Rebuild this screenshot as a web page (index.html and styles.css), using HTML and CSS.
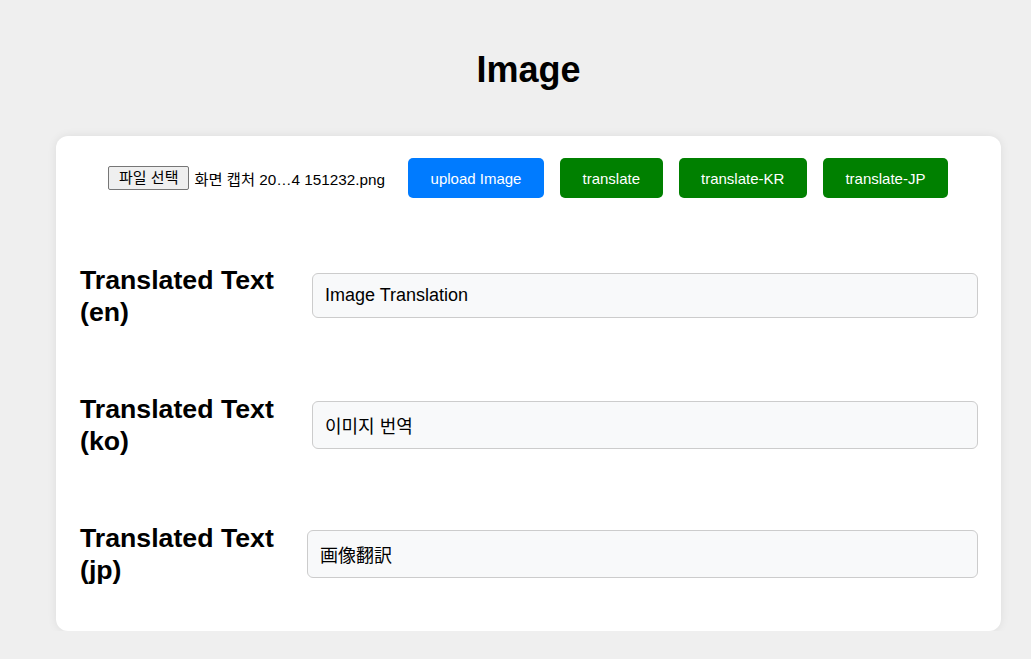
FILE: index.html
```html
<!DOCTYPE html>
<html lang="ko">
<head>
<meta charset="utf-8">
<title>Image</title>
<link rel="stylesheet" href="styles.css">
</head>
<body>
<div class="page">
  <h1 class="title">Image</h1>
  <div class="card">
    <div class="toolbar">
      <div class="file">
        <span class="file-btn">파일 선택</span>
        <span class="file-name">화면 캡처 20…4 151232.png</span>
      </div>
      <button class="btn btn-blue">upload Image</button>
      <button class="btn btn-green">translate</button>
      <button class="btn btn-green">translate-KR</button>
      <button class="btn btn-green">translate-JP</button>
    </div>
    <div class="row">
      <h2 class="label">Translated Text (en)</h2>
      <div class="field field-en">Image Translation</div>
    </div>
    <div class="row">
      <h2 class="label">Translated Text (ko)</h2>
      <div class="field field-ko">이미지 번역</div>
    </div>
    <div class="row">
      <h2 class="label label-narrow">Translated Text (jp)</h2>
      <div class="field field-jp">画像翻訳</div>
    </div>
  </div>
</div>
</body>
</html>
```
FILE: styles.css
```css
html, body {
  margin: 0;
  padding: 0;
  background: #efefef;
  font-family: "Liberation Sans", Arial, sans-serif;
  color: #000;
}

.page {
  padding: 0 30px 0 56px;
}

.title {
  margin: 0;
  padding-top: 49px;
  height: 136px;
  box-sizing: border-box;
  text-align: center;
  font-size: 36px;
  line-height: 42px;
  font-weight: bold;
}

.card {
  background: #fff;
  border-radius: 12px;
  box-shadow: 0 0 10px rgba(0, 0, 0, 0.08);
  padding: 22px 23px 13px 24px;
}

.toolbar {
  display: flex;
  justify-content: center;
  align-items: center;
  gap: 16px;
  height: 40px;
  margin-bottom: 33px;
  padding-right: 2px;
}

.file {
  width: 284px;
  display: flex;
  align-items: center;
  gap: 5px;
  font-size: 15px;
  font-family: "Liberation Sans", "Noto Sans CJK KR", sans-serif;
}

.file-btn {
  display: inline-block;
  height: 24px;
  box-sizing: border-box;
  padding: 0 10px;
  line-height: 22px;
  border: 1px solid #767676;
  border-radius: 2px;
  background: #efefef;
  white-space: nowrap;
}

.file-name {
  white-space: nowrap;
  font-size: 15.3px;
}

.btn {
  height: 40px;
  padding: 0 22.5px;
  border: none;
  border-radius: 5px;
  color: #fff;
  font-family: "Liberation Sans", Arial, sans-serif;
  font-size: 15px;
}

.btn-blue {
  background: #007bff;
}

.btn-green {
  background: #008000;
}

.row {
  display: flex;
  align-items: center;
  height: 129px;
}

.label {
  margin: 0;
  width: 212px;
  flex: none;
  margin-right: 20px;
  font-size: 26.7px;
  line-height: 32px;
  font-weight: bold;
}

.label-narrow {
  width: 207px;
}

.field {
  flex: 1;
  box-sizing: border-box;
  height: 48px;
  padding: 0 12px;
  display: flex;
  align-items: center;
  background: #f8f9fa;
  border: 1px solid #cccccc;
  border-radius: 6px;
  font-size: 18px;
}

.field-en {
  height: 45px;
}

.field-ko {
  font-family: "Noto Sans CJK KR", sans-serif;
}

.field-jp {
  font-family: "Noto Sans CJK JP", sans-serif;
}
```
